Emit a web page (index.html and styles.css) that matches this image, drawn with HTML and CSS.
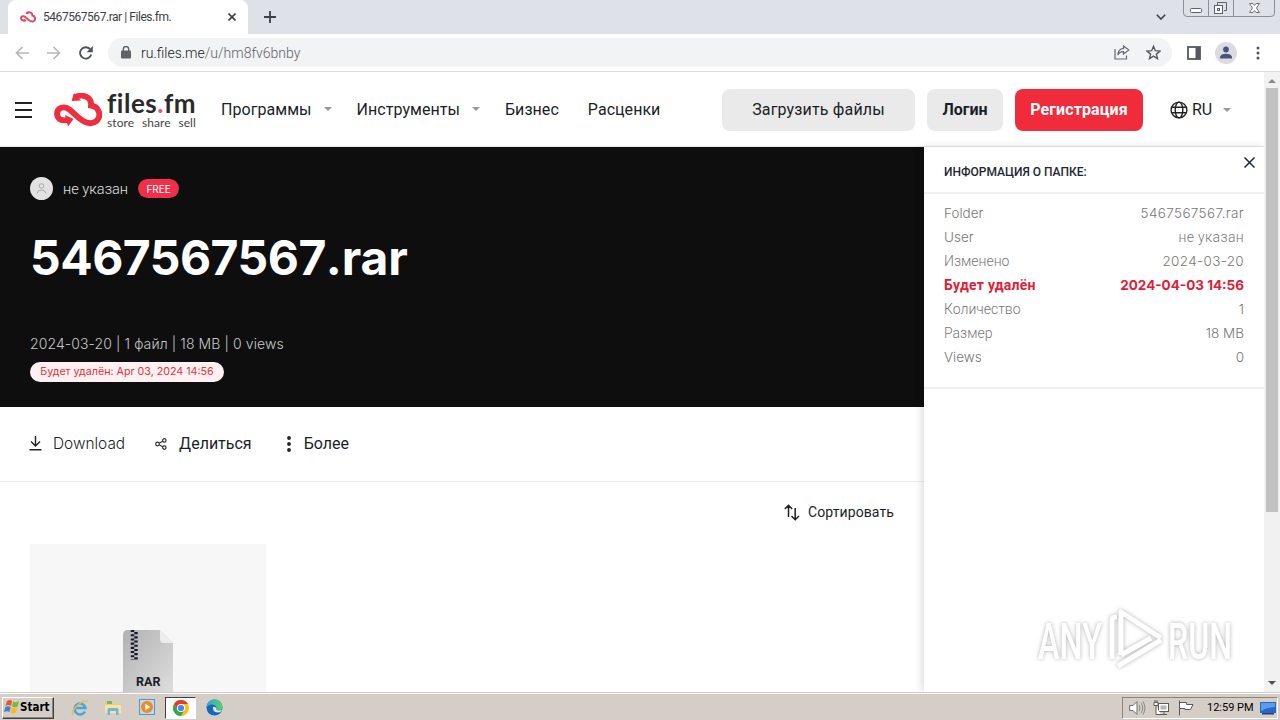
FILE: index.html
```html
<!DOCTYPE html>
<html lang="ru">
<head>
    <meta charset="UTF-8">
    <meta name="viewport" content="width=device-width, initial-scale=1.0">
    <title>5467567567.rar | Files.fm.</title>
    <link rel="stylesheet" href="styles.css">
</head>
<body>
    <svg class="defs" width="0" height="0">
        <symbol id="cloud" viewBox="0 0 48 34">
            <path d="M21 4.500C28 0 38 4 37 12.500C45 13.500 48 23 42.500 28C36.500 33 30 29 25 25L16 17C10.500 12 3 14.500 3 21C3.500 27 9 28.500 15 26.500" fill="none" stroke="currentColor" stroke-width="5.800"/>
            <path d="M17.500 8 20 0 27 7.500Z M11 22 19.500 26 14 33.500Z" fill="currentColor"/>
        </symbol>
    </svg>

    <div class="tabstrip">
        <div class="tab">
            <svg class="tab-logo" width="16" height="12"><use href="#cloud"/></svg>
            <span class="tab-title">5467567567.rar | Files.fm.</span>
            <svg class="tab-close" width="8" height="8" viewBox="0 0 8 8"><path d="M.5 .5 7.5 7.5M7.5 .5 .5 7.5" stroke="#3c4043" stroke-width="1.6"/></svg>
        </div>
        <svg class="tab-new" width="12" height="12" viewBox="0 0 12 12"><path d="M6 0V12M0 6H12" stroke="#3c4043" stroke-width="1.8"/></svg>
        <svg class="tab-search" width="10" height="6" viewBox="0 0 10 6"><path d="M.8 .8 5 5 9.2 .8" fill="none" stroke="#3c4043" stroke-width="1.6"/></svg>
        <svg class="window-buttons" width="94" height="18" viewBox="0 0 94 18" fill="none">
            <path d="M.5 0V13Q.5 16.5 4 16.5H88Q91.500 16.500 91.500 13V0M25.500 0V16M50.500 0V16" stroke="#8b8f9b"/>
            <rect x="7.500" y="8.500" width="11" height="4" rx="1" fill="#fff" stroke="#5b606b"/>
            <path d="M34.500 5V2.500H43.500V10.500H41" stroke="#5b606b"/>
            <rect x="31.500" y="5.500" width="8" height="8" fill="#fff" stroke="#5b606b"/>
            <rect x="34.500" y="8.500" width="2" height="2" stroke="#5b606b"/>
            <path d="M66.500 3.500H70L71.500 5.500 73 3.500H76.500L73.500 8 76.500 12.500H73L71.500 10.500 70 12.500H66.500L69.500 8Z" fill="#fff" stroke="#6b707b"/>
        </svg>
    </div>

    <div class="toolbar">
        <svg class="nav-back" width="14" height="14" viewBox="0 0 14 14" fill="none" stroke="#b6b8bb" stroke-width="1.700"><path d="M14 7H1.500M7.500 1 1.500 7 7.500 13"/></svg>
        <svg class="nav-forward" width="14" height="14" viewBox="0 0 14 14" fill="none" stroke="#b6b8bb" stroke-width="1.700"><path d="M0 7H12.500M6.500 1 12.500 7 6.500 13"/></svg>
        <svg class="nav-reload" width="14" height="14" viewBox="0 0 14 14"><path d="M12.300 8.500A5.700 5.700 0 1 1 11 3" fill="none" stroke="#50545a" stroke-width="1.900"/><path d="M13.800 0V6.200H7.600Z" fill="#50545a"/></svg>
        <div class="omnibox">
            <svg width="10" height="13" viewBox="0 0 10 13"><rect x="0" y="4.500" width="10" height="8" rx="1" fill="#5f6368"/><path d="M2.300 5V3.200A2.700 2.700 0 0 1 7.700 3.200V5" fill="none" stroke="#5f6368" stroke-width="1.400"/></svg>
            <span class="url">ru.files.me<span class="url-path">/u/hm8fv6bnby</span></span>
            <svg class="share" width="16" height="15" viewBox="0 0 16 15" fill="none" stroke="#666a70" stroke-width="1.200"><path d="M1 4V14H12.500V10.500"/><path d="M9.500 1 14.800 5 9.500 9V6.700C7 6.600 5 7.500 3.800 10 4 6 6 3.700 9.500 3.300Z"/></svg>
            <svg width="15" height="15" viewBox="0 0 15 15"><path d="M7.500 1.300 9.300 5.700 14 6.100 10.400 9.100 11.500 13.700 7.500 11.200 3.500 13.700 4.600 9.100 1 6.100 5.700 5.700Z" fill="none" stroke="#55595f" stroke-width="1.400"/></svg>
        </div>
        <svg class="side-panel" width="14" height="14" viewBox="0 0 14 14"><rect x="1" y="1" width="12" height="12" fill="none" stroke="#55595f" stroke-width="1.800"/><path d="M8.500 1H13V13H8.500Z" fill="#55595f"/></svg>
        <svg class="profile" width="22" height="22" viewBox="0 0 22 22"><circle cx="11" cy="11" r="11" fill="#dadce2"/><circle cx="11" cy="7.500" r="2.900" fill="#48547a"/><path d="M5 16.500V15Q6 11.800 11 11.800T17 15V16.500Z" fill="#48547a"/></svg>
        <svg class="browser-menu" width="4" height="14" viewBox="0 0 4 14" fill="#50545a"><circle cx="2" cy="2" r="1.500"/><circle cx="2" cy="7" r="1.500"/><circle cx="2" cy="12" r="1.500"/></svg>
    </div>

    <div class="viewport">
        <div class="page">
            <header class="header">
                <svg class="burger" width="17" height="16" viewBox="0 0 17 16"><path d="M0 1H17M0 8H17M0 15H17" stroke="#222" stroke-width="2"/></svg>
                <a class="logo">
                    <svg width="48" height="34"><use href="#cloud"/></svg>
                    <span class="logo-text">
                        <span class="logo-name">files<i>.</i>fm</span>
                        <span class="logo-slogan">store share sell</span>
                    </span>
                </a>
                <nav class="menu">
                    <a class="menu-programs">Программы</a><span class="caret"></span>
                    <a class="menu-tools">Инструменты</a><span class="caret"></span>
                    <a class="menu-business">Бизнес</a>
                    <a class="menu-prices">Расценки</a>
                </nav>
                <div class="btn btn-upload"><span>Загрузить файлы</span></div>
                <div class="btn btn-login"><span>Логин</span></div>
                <div class="btn btn-register"><span>Регистрация</span></div>
                <div class="language">
                    <svg width="18" height="18" viewBox="0 0 18 18" fill="none" stroke="#222" stroke-width="1.400"><circle cx="9" cy="9" r="7.900"/><ellipse cx="9" cy="9" rx="3.800" ry="7.900"/><path d="M1.800 6.200H16.200M1.800 11.800H16.200"/></svg>
                    <span class="language-code">RU</span>
                    <span class="caret"></span>
                </div>
            </header>

            <div class="columns">
                <main class="main">
                    <section class="hero">
                        <div class="owner">
                            <svg width="23" height="23" viewBox="0 0 23 23"><circle cx="11.500" cy="11.500" r="11.500" fill="#e2e2e2"/><circle cx="11.500" cy="9" r="2.300" fill="none" stroke="#aaa"/><path d="M7 16.500Q7.500 13 11.500 13T16 16.500" fill="none" stroke="#aaa"/></svg>
                            <span class="owner-name">не указан</span>
                            <span class="badge"><span>FREE</span></span>
                        </div>
                        <h1 class="title">5467567567<span class="title-ext">.rar</span></h1>
                        <div class="meta">2024-03-20 | 1 файл | 18 MB | 0 views</div>
                        <div class="expires">Будет удалён: Apr 03, 2024 14:56</div>
                    </section>

                    <section class="actions">
                        <svg class="icon-download" width="13" height="15" viewBox="0 0 13 15" fill="none" stroke="#222" stroke-width="1.400"><path d="M6.500 0V10M2 5.500 6.500 10 11 5.500M.5 13.700H12.500"/></svg>
                        <span class="action-download">Download</span>
                        <svg class="icon-share" width="12" height="12" viewBox="0 0 12 12" fill="none" stroke="#333" stroke-width="1.200"><circle cx="2.500" cy="6" r="1.800"/><circle cx="9.300" cy="2.400" r="1.700"/><circle cx="9.300" cy="9.600" r="1.700"/><path d="M4.200 5.200 7.700 3.200M4.200 6.800 7.700 8.800"/></svg>
                        <span class="action-share">Делиться</span>
                        <svg class="icon-more" width="4" height="16" viewBox="0 0 4 16" fill="#222"><circle cx="2" cy="2" r="1.900"/><circle cx="2" cy="8" r="1.900"/><circle cx="2" cy="14" r="1.900"/></svg>
                        <span class="action-more">Более</span>
                    </section>

                    <section class="files">
                        <div class="sort">
                            <svg width="16" height="17" viewBox="0 0 16 17" fill="none" stroke="#222" stroke-width="1.500"><path d="M4.500 13V1.500M.8 5 4.500 1.300 8.200 5M11.200 4V15.500M7.500 12 11.200 15.700 14.900 12"/></svg>
                            <span class="sort-label">Сортировать</span>
                        </div>
                        <div class="file-card">
                            <div class="file-icon">
                                <svg width="50" height="64" viewBox="0 0 50 64">
                                    <defs><linearGradient id="paper" x1="0" y1="0" x2="1" y2="1"><stop offset="0" stop-color="#b2b2b2"/><stop offset="1" stop-color="#dedede"/></linearGradient></defs>
                                    <path d="M5 0H37L50 13V64H0V5Q0 0 5 0Z" fill="url(#paper)"/>
                                    <path d="M37 0 50 13H41Q37 13 37 9Z" fill="#ededed"/>
                                    <path d="M9.500 0V30" stroke="#191d2c" stroke-width="3.500" stroke-dasharray="2.100 2.100"/>
                                    <path d="M13 2.100V30" stroke="#191d2c" stroke-width="3.500" stroke-dasharray="2.100 2.100"/>
                                </svg>
                                <span class="file-type">RAR</span>
                            </div>
                        </div>
                    </section>
                </main>

                <aside class="info">
                    <div class="info-head">
                        <span class="info-title">ИНФОРМАЦИЯ О ПАПКЕ:</span>
                        <svg class="info-close" width="11" height="11" viewBox="0 0 11 11"><path d="M.5 .5 10.500 10.500M10.500 .5 .5 10.500" stroke="#1c2733" stroke-width="1.500"/></svg>
                    </div>
                    <div class="info-list">
                        <div class="row"><span class="latin">Folder</span><span class="latin wide">5467567567.rar</span></div>
                        <div class="row"><span class="latin">User</span><span class="wide">не указан</span></div>
                        <div class="row"><span>Изменено</span><span class="latin wide">2024-03-20</span></div>
                        <div class="row row-alert"><span class="row-alert-label">Будет удалён</span><span class="latin">2024-04-03 14:56</span></div>
                        <div class="row"><span>Количество</span><span class="latin">1</span></div>
                        <div class="row"><span>Размер</span><span class="latin">18 MB</span></div>
                        <div class="row"><span class="latin">Views</span><span class="latin">0</span></div>
                    </div>
                </aside>
            </div>
        </div>

        <div class="scrollbar">
            <span class="scroll-up"></span>
            <div class="scroll-thumb"></div>
            <span class="scroll-down"></span>
        </div>
    </div>

    <svg class="watermark" width="196" height="64" viewBox="0 0 196 64" fill="#fff">
        <text x="0" y="51" textLength="64" lengthAdjust="spacingAndGlyphs">ANY</text>
        <path d="M74 51V12Q74 9 79 9M83 47V4L123 30M83 47 113 30M83 15V4M80 58 123 32" fill="none" stroke="#fff" stroke-width="5" stroke-linejoin="round"/>
        <text x="130" y="51" textLength="64" lengthAdjust="spacingAndGlyphs">RUN</text>
    </svg>

    <div class="taskbar">
        <div class="start">
            <svg width="16" height="16" viewBox="0 0 16 16"><path d="M3 2Q6 0 8 2L7 7Q4 5 1.500 7Z" fill="#e8562a"/><path d="M9 2.500Q12 4 15 2L13.500 7.500Q11 9 8 7.500Z" fill="#7cb83c"/><path d="M1.300 8Q4 6.500 6.700 8L5.500 13Q3 11.500 0 13Z" fill="#3f83d0"/><path d="M7.700 8.500Q10 10 13.200 8.500L12 13.500Q9 15.500 6.500 13.500Z" fill="#f5bd25"/></svg>
            <span class="start-label">Start</span>
        </div>
        <svg class="task-ie" width="18" height="18" viewBox="0 0 18 18" fill="none"><path d="M14 12.500A5.500 5.500 0 1 1 14.500 9H5" stroke="#45a6de" stroke-width="2.600"/><path d="M2 16C-1 12 11 0 16.500 2.500" stroke="#e8bd45" stroke-width="1.400"/></svg>
        <svg class="task-explorer" width="18" height="18" viewBox="0 0 18 18"><path d="M1 3H6L7 4.500H15V8H1Z" fill="#e8cf74"/><path d="M3 2H8V5H3Z" fill="#74b66a"/><path d="M1 6H17V14H1Z" fill="#f6e5a0"/><path d="M3.500 16V10.500Q3.500 9 5 9H13Q14.500 9 14.500 10.500V16H12V12H6V16Z" fill="#6fb6dc"/></svg>
        <svg class="task-media" width="17" height="17" viewBox="0 0 17 17"><rect x=".5" y=".5" width="15" height="15" fill="#b9daf2" stroke="#5b93c3"/><circle cx="8" cy="8" r="6" fill="#f18a1d"/><path d="M6.300 4.700 11.500 8 6.300 11.300Z" fill="#fff"/></svg>
        <div class="task-active">
            <svg width="16" height="16" viewBox="0 0 16 16"><circle cx="8" cy="8" r="8" fill="#fbc116"/><path d="M1.070 4A8 8 0 0 1 14.930 4H8L4.500 10Z" fill="#e33b2e"/><path d="M1.070 4A8 8 0 0 0 8 16L11.500 10 8 11.500 4.500 10Z" fill="#2da94f"/><circle cx="8" cy="8" r="4" fill="#fff"/><circle cx="8" cy="8" r="3.100" fill="#4285f4"/></svg>
        </div>
        <svg class="task-edge" width="17" height="17" viewBox="0 0 17 17"><defs><linearGradient id="edge" x1="0" x2="1"><stop offset="0" stop-color="#2aa5e0"/><stop offset="1" stop-color="#5bd167"/></linearGradient></defs><circle cx="8.500" cy="8.500" r="8" fill="#1767b8"/><path d="M.5 8.500A8 8 0 0 1 16.500 8Q16.500 11 13 11.500 9.500 11.500 10.300 9.300 10.500 6 6.500 5.500 2 5.500.5 8.500Z" fill="url(#edge)"/><path d="M7 8Q6.500 13 11.500 13.500 14 13.500 15 12.500L17 10Q16 11.500 13 11.500 9.500 11.500 10.300 9.300 9 7 7 8Z" fill="#d9e7ee"/></svg>
        <div class="tray">
            <svg class="tray-sound" width="17" height="16" viewBox="0 0 17 16"><path d="M.6 5.500H4L8 1.500V14.500L4 10.500H.6Z" fill="#fff" stroke="#6d6a66"/><path d="M10 5Q12 8 10 11M12 3Q15.500 8 12 13M14 1.500Q18 8 14 14.500" fill="none" stroke="#8a8783"/></svg>
            <svg class="tray-network" width="17" height="16" viewBox="0 0 17 16" fill="#fff" stroke="#5d5b58"><rect x="5.500" y="3.500" width="10" height="8"/><path d="M8 14.500H14M11 11.500V14M1 2.500H5V5.500H1ZM2 0V2M4 0V2M3 6V14.500H8"/><rect x="7.500" y="5.500" width="6" height="4" fill="#b8b6b2" stroke="none"/></svg>
            <svg class="tray-flag" width="16" height="16" viewBox="0 0 16 16" fill="#fff" stroke="#5d5b58"><path d="M1.500 .5V15.500M1.500 2.500H8.500V4.500H15L12.500 9.500H7V8.500H1.500Z"/></svg>
            <span class="clock">12:59 PM</span>
            <svg width="16" height="14" viewBox="0 0 16 14"><path d="M0 1H16V12H0Z" fill="#2b66c4"/><path d="M1 2H15V6Q7 6 1 10Z" fill="#5c9cec"/><path d="M2 12H14V13.500H2Z" fill="#2b3e66"/></svg>
        </div>
    </div>
</body>
</html>
```
FILE: styles.css
```css
* {
    box-sizing: border-box;
}
body {
    margin: 0;
    width: 1280px;
    height: 720px;
    overflow: hidden;
    display: flex;
    flex-direction: column;
    background: #fff;
    color: #1a1f27;
    font-family: Roboto, "Noto Sans", sans-serif;
    font-size: 16px;
    white-space: nowrap;
}
svg {
    display: block;
    flex: none;
}
.defs {
    position: absolute;
}

/* browser */
.tabstrip {
    height: 34px;
    background: #dee1e8;
    display: flex;
    align-items: center;
}
.tab {
    width: 240px;
    height: 34px;
    margin-left: 8px;
    padding: 0 12px;
    background: #fff;
    border-radius: 8px 8px 0 0;
    display: flex;
    align-items: center;
}
.tab-logo {
    color: #e0485c;
}
.tab-title {
    margin-left: 7px;
    flex: none;
    font-size: 12px;
    letter-spacing: -0.45px;
    color: #3c4043;
}
.tab-close {
    margin-left: auto;
}
.tab-new {
    margin-left: 16px;
}
.tab-search {
    margin-left: auto;
    margin-right: 17px;
}
.window-buttons {
    align-self: flex-start;
    margin-right: 3px;
}
.toolbar {
    height: 38px;
    border-bottom: 1px solid #dcdcdc;
    display: flex;
    align-items: center;
    padding-left: 15px;
}
.nav-forward {
    margin-left: 18px;
}
.nav-reload {
    margin-left: 18px;
}
.omnibox {
    width: 1064px;
    height: 29px;
    margin-left: 15px;
    padding: 0 11px 0 13px;
    border-radius: 15px;
    background: #f1f3f4;
    display: flex;
    align-items: center;
}
.url {
    margin-left: 10px;
    font-size: 14px;
    font-weight: 300;
    color: #202124;
}
.url-path {
    color: #5f6368;
}
.share {
    margin-left: auto;
    margin-right: 16px;
}
.side-panel {
    margin-left: 15px;
}
.profile {
    margin-left: 14px;
}
.browser-menu {
    margin-left: 19px;
}
.viewport {
    height: 620px;
    display: flex;
    overflow: hidden;
}
.page {
    width: 1264px;
    display: flex;
    flex-direction: column;
}
.scrollbar {
    width: 16px;
    background: #f1f1f1;
    display: flex;
    flex-direction: column;
    align-items: center;
}
.scroll-up {
    border: 4px solid transparent;
    border-top: 0;
    border-bottom: 4px solid #8b8b8b;
    margin: 7px 0 5px;
}
.scroll-thumb {
    width: 12px;
    height: 424px;
    background: #c1c1c1;
}
.scroll-down {
    border: 4px solid transparent;
    border-bottom: 0;
    border-top: 4px solid #505050;
    margin: auto 0 7px;
}

/* header */
.header {
    height: 75px;
    display: flex;
    align-items: center;
    padding: 2px 0 0 15px;
    border-bottom: 1px solid #e8e8e8;
}
.logo {
    display: flex;
    align-items: center;
    margin-left: 22px;
    width: 143px;
    color: #ee2d3f;
}
.logo-text {
    display: flex;
    flex-direction: column;
    align-items: flex-start;
    margin-left: 5px;
}
.logo-name {
    font-family: Lato, sans-serif;
    font-size: 26px;
    line-height: 22px;
    font-weight: 700;
    letter-spacing: 0.5px;
    font-variant-ligatures: none;
    color: #2a2a2a;
}
.logo-name i {
    font-style: normal;
    color: #e75480;
}
.logo-slogan {
    margin-top: 3px;
    font-family: Lato, sans-serif;
    font-size: 12px;
    line-height: 11px;
    letter-spacing: 0.1px;
    word-spacing: 4.5px;
    color: #444;
}
.menu {
    display: flex;
    align-items: center;
    margin-left: 24px;
    padding-bottom: 2px;
    letter-spacing: 0.05px;
}
.menu-programs,
.menu-tools {
    margin-right: 12px;
}
.menu-tools,
.menu-business {
    margin-left: 25px;
}
.menu-prices {
    margin-left: 29px;
}
.caret {
    width: 0;
    height: 0;
    border: 4px solid transparent;
    border-bottom: 0;
    border-top: 4px solid #999;
}
.btn {
    height: 42px;
    padding-bottom: 2px;
    border-radius: 8px;
    background: #eaeaea;
    display: flex;
    align-items: center;
    justify-content: center;
    margin-left: 12px;
}
.btn-upload {
    width: 193px;
    margin-left: auto;
    letter-spacing: 0.15px;
}
.btn-login {
    width: 76px;
    font-weight: 700;
}
.btn-register {
    width: 128px;
    font-weight: 700;
    letter-spacing: 0.1px;
    color: #fff;
    background: #f02b3b;
}
.language {
    width: 94px;
    margin-left: 27px;
    padding-bottom: 1px;
    display: flex;
    align-items: center;
}
.language-code {
    margin: 0 11px 0 4px;
}

/* folder */
.columns {
    flex: 1;
    display: flex;
    min-height: 0;
}
.main {
    width: 924px;
}
.hero {
    height: 260px;
    padding: 30px 30px 0;
    background: #0e0e0e;
    color: #fff;
}
.owner {
    display: flex;
    align-items: center;
    height: 23px;
}
.owner-name {
    margin: 0 10px;
    font-size: 14.6px;
    font-weight: 300;
    color: #e0e0e0;
}
.badge {
    width: 41px;
    height: 19px;
    border-radius: 10px;
    background: #f0304a;
    display: flex;
    align-items: center;
    justify-content: center;
    font-family: Inter, sans-serif;
    font-size: 10px;
}
.title {
    margin: 23px 0 0;
    font-family: Inter, sans-serif;
    font-size: 48px;
    line-height: 70px;
    font-weight: 700;
    letter-spacing: -0.5px;
}
.title-ext {
    letter-spacing: -0.1px;
}
.meta {
    margin-top: 41px;
    font-family: Inter, sans-serif;
    font-size: 14px;
    line-height: 20px;
    font-weight: 300;
    letter-spacing: 0.1px;
    color: #c8c8c8;
}
.expires {
    width: 194px;
    height: 20px;
    margin-top: 8px;
    padding-bottom: 1px;
    border-radius: 10px;
    background: #fff0f1;
    display: flex;
    align-items: center;
    justify-content: center;
    font-family: Inter, sans-serif;
    font-size: 10.7px;
    color: #dc3545;
}
.actions {
    height: 75px;
    padding: 0 0 1px 29px;
    border-bottom: 1px solid #ececec;
    display: flex;
    align-items: center;
}
.action-download {
    margin: 0 30px 0 11px;
    font-family: Inter, sans-serif;
    font-size: 15.4px;
    font-weight: 300;
}
.action-share {
    margin: 0 35px 0 12px;
}
.action-more {
    margin-left: 13px;
}
.files {
    padding: 20px 30px 0;
}
.sort {
    display: flex;
    align-items: center;
    justify-content: flex-end;
    height: 20px;
    gap: 8px;
    font-size: 14px;
    letter-spacing: 0.1px;
}
.file-card {
    width: 236px;
    height: 236px;
    margin-top: 22px;
    padding-top: 86px;
    background: #f7f7f7;
    display: flex;
    justify-content: center;
}
.file-icon {
    position: relative;
    height: 64px;
}
.file-type {
    position: absolute;
    left: 13px;
    top: 44px;
    font-size: 12.5px;
    line-height: 16px;
    font-weight: 700;
}
.info {
    width: 340px;
    background: #fff;
    box-shadow: -2px 0 8px rgba(0, 0, 0, 0.15);
}
.info-head {
    height: 47px;
    padding: 0 9px 0 20px;
    border-bottom: 2px solid #f0f0f0;
    display: flex;
    justify-content: space-between;
}
.info-title {
    font-size: 12px;
    line-height: 50px;
    font-weight: 500;
    color: #1c2733;
}
.info-close {
    margin-top: 10px;
}
.info-list {
    height: 195px;
    padding: 7px 20px 0;
    border-bottom: 2px solid #f0f0f0;
    font-size: 14px;
    font-weight: 300;
    color: #777;
}
.row {
    height: 24px;
    line-height: 24px;
    display: flex;
    justify-content: space-between;
}
.row-alert {
    font-weight: 700;
    color: #dc2138;
}
.row-alert-label {
    letter-spacing: 0.25px;
}
.latin {
    font-family: Inter, sans-serif;
    font-size: 13.5px;
}
.wide {
    letter-spacing: 0.35px;
}

/* taskbar */
.taskbar {
    height: 28px;
    background: #d5cec6;
    border-top: 1px solid #d5cec6;
    box-shadow: inset 0 1px #fff;
    display: flex;
    align-items: center;
    padding: 2px 2px 0;
}
.start {
    width: 52px;
    height: 22px;
    border: 1px solid;
    border-color: #fff #404040 #404040 #fff;
    box-shadow: inset -1px -1px #8a857e;
    display: flex;
    align-items: center;
    padding: 0 0 1px 1px;
}
.start-label {
    font-family: "DejaVu Sans Condensed", "DejaVu Sans", sans-serif;
    font-size: 11.5px;
    font-weight: 700;
    font-stretch: condensed;
    color: #000;
}
.task-ie {
    margin-left: 17px;
}
.task-explorer {
    margin-left: 15px;
}
.task-media {
    margin-left: 17px;
}
.task-active {
    width: 31px;
    height: 22px;
    margin: 0 10px 0 9px;
    background: #fff;
    border: 1px solid;
    border-color: #404040 #fff #fff #404040;
    display: flex;
    align-items: center;
    justify-content: center;
}
.tray {
    width: 156px;
    height: 22px;
    margin-left: auto;
    padding: 0 1px 0 6px;
    border: 1px solid;
    border-color: #8a857e #fff #fff #8a857e;
    display: flex;
    align-items: center;
}
.tray-network {
    margin-left: 7px;
}
.tray-flag {
    margin-left: 8px;
}
.clock {
    margin: 0 auto 0 13px;
    font-size: 11px;
    color: #000;
}

/* lies over the page */
.watermark {
    position: absolute;
    left: 1038px;
    top: 608px;
    overflow: visible;
    font-family: Roboto, sans-serif;
    font-size: 50px;
    font-weight: 500;
    filter: drop-shadow(0 0 2px rgba(0, 0, 0, 0.3));
}
```
